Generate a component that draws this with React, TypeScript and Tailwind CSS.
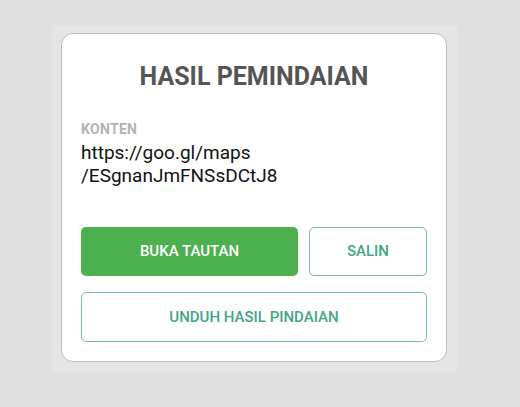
export default function App() {
  return (
    <div
      className="w-[520px] h-[407px] bg-[#e0e0e0] pt-[25px] pl-[52px]"
      style={{ fontFamily: 'Roboto, "Noto Sans", sans-serif' }}
    >
      <div className="w-[405px] bg-[#e5e5e5] pt-[8px] pb-[10px] pl-[9px] pr-[10px]">
        <div className="w-[386px] bg-white border border-[#bdbdbd] rounded-[12px] pt-[29px] pb-[19px] px-[19px] flex flex-col">
          <h1 className="text-[25px] leading-[28px] font-bold text-[#555555] text-center">
            HASIL PEMINDAIAN
          </h1>
          <div className="mt-[30px] text-[14px] leading-[16px] font-bold tracking-[0.3px] text-[#b3b3b3]">KONTEN</div>
          <div className="mt-[4px] text-[19px] leading-[23px] text-[#111111]">
            <div>https://goo.gl/maps</div>
            <div>/ESgnanJmFNSsDCtJ8</div>
          </div>
          <div className="mt-[40px] flex gap-[11px]">
            <button className="w-[217px] h-[49px] rounded-[5px] bg-[#4caf50] text-white text-[15px] font-medium">
              BUKA TAUTAN
            </button>
            <button className="flex-1 h-[49px] rounded-[5px] border border-[#72c1a2] bg-white text-[#43a681] text-[15px] font-medium">
              SALIN
            </button>
          </div>
          <button className="mt-[16px] h-[50px] rounded-[5px] border border-[#72c1a2] bg-white text-[#43a681] text-[15px] font-medium">
            UNDUH HASIL PINDAIAN
          </button>
        </div>
      </div>
    </div>
  );
}
